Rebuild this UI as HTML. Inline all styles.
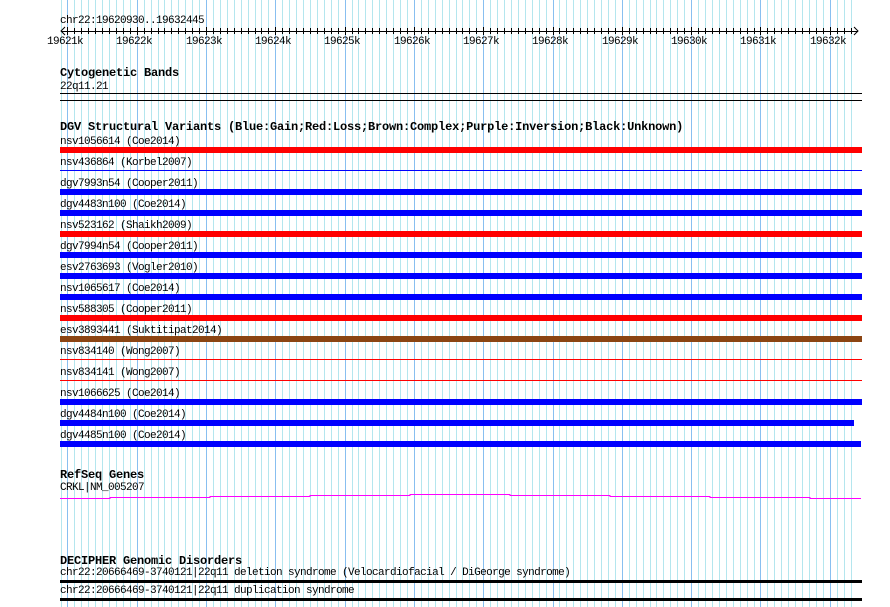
<!DOCTYPE html>
<html><head><meta charset="utf-8"><style>
html,body{margin:0;padding:0;background:#fff;width:890px;height:607px;overflow:hidden}
.t{position:absolute;font-family:"Liberation Mono",monospace;font-size:11px;letter-spacing:-0.6px;line-height:12px;color:#000;white-space:pre}
.h{position:absolute;font-family:"Liberation Mono",monospace;font-weight:bold;font-size:12px;letter-spacing:-0.2px;line-height:13px;color:#000;white-space:pre}
</style></head><body>
<svg id="s" width="890" height="607" style="position:absolute;left:0;top:0" xmlns="http://www.w3.org/2000/svg" shape-rendering="crispEdges">
<defs>
<pattern id="mn" x="60" y="0" width="7" height="607" patternUnits="userSpaceOnUse"><rect x="0" y="0" width="1" height="607" fill="#b4e6ee"/></pattern>
</defs>
<g id="grid"><rect id="fb" x="60" y="0" width="798" height="607" fill="url(#mn)"/></g>
<g id="ticks"></g>
<rect x="61" y="31" width="797" height="1" fill="#000"/>
<path d="M65 27 L61 31 L65 35 M854 27 L858 31 L854 35" stroke="#000" fill="none" stroke-width="1" shape-rendering="auto"/>
<rect x="60" y="93" width="802" height="1" fill="#000"/>
<rect x="60" y="100" width="802" height="1" fill="#000"/>
<rect x="60" y="147" width="802" height="6" fill="#ff0000"/>
<rect x="60" y="170" width="802" height="1" fill="#0000ff"/>
<rect x="60" y="189" width="802" height="6" fill="#0000ff"/>
<rect x="60" y="210" width="802" height="6" fill="#0000ff"/>
<rect x="60" y="231" width="802" height="6" fill="#ff0000"/>
<rect x="60" y="252" width="802" height="6" fill="#0000ff"/>
<rect x="60" y="273" width="802" height="6" fill="#0000ff"/>
<rect x="60" y="294" width="802" height="6" fill="#0000ff"/>
<rect x="60" y="315" width="802" height="6" fill="#ff0000"/>
<rect x="60" y="336" width="802" height="6" fill="#8b4513"/>
<rect x="60" y="359" width="802" height="1" fill="#ff0000"/>
<rect x="60" y="380" width="802" height="1" fill="#ff0000"/>
<rect x="60" y="399" width="802" height="6" fill="#0000ff"/>
<rect x="60" y="420" width="794" height="6" fill="#0000ff"/>
<rect x="60" y="441" width="801" height="6" fill="#0000ff"/>
<path d="M60 498.5 H110 V497.5 H210 V496.5 H310 V495.5 H410 V494.5 H510 V495.5 H610 V496.5 H710 V497.5 H810 V498.5 H861" stroke="#ff00ff" fill="none" stroke-width="1"/>
<rect x="60" y="580" width="802" height="3" fill="#000"/>
<rect x="60" y="598" width="802" height="3" fill="#000"/>
</svg>
<script>
(function(){
var ns="http://www.w3.org/2000/svg",g=document.getElementById("grid"),tk=document.getElementById("ticks");
var fb=document.getElementById("fb");fb.parentNode.removeChild(fb);
for(var i=0;i<115;i++){
 var x=Math.round(60.5+6.93*i);if(x>858)break;
 var major=((i-1)%10===0);
 var r=document.createElementNS(ns,"rect");
 r.setAttribute("x",x);r.setAttribute("y",0);r.setAttribute("width",1);r.setAttribute("height",607);
 r.setAttribute("fill",major?"#88bff0":"#b4e6ee");g.appendChild(r);
 if(x>62&&x<856){var t=document.createElementNS(ns,"rect");
 t.setAttribute("x",x);t.setAttribute("y",major?27:28);t.setAttribute("width",1);t.setAttribute("height",major?8:6);
 t.setAttribute("fill","#000");tk.appendChild(t);}
}
})();
</script>
<div class="t" style="left:60px;top:15px">chr22:19620930..19632445</div>
<div class="t" style="left:47px;top:36px">19621k</div>
<div class="t" style="left:116px;top:36px">19622k</div>
<div class="t" style="left:186px;top:36px">19623k</div>
<div class="t" style="left:255px;top:36px">19624k</div>
<div class="t" style="left:324px;top:36px">19625k</div>
<div class="t" style="left:394px;top:36px">19626k</div>
<div class="t" style="left:463px;top:36px">19627k</div>
<div class="t" style="left:532px;top:36px">19628k</div>
<div class="t" style="left:602px;top:36px">19629k</div>
<div class="t" style="left:671px;top:36px">19630k</div>
<div class="t" style="left:740px;top:36px">19631k</div>
<div class="t" style="left:810px;top:36px">19632k</div>
<div class="h" style="left:60px;top:67px">Cytogenetic Bands</div>
<div class="t" style="left:60px;top:81px">22q11.21</div>
<div class="h" style="left:60px;top:121px">DGV Structural Variants (Blue:Gain;Red:Loss;Brown:Complex;Purple:Inversion;Black:Unknown)</div>
<div class="t" style="left:60px;top:136px">nsv1056614 (Coe2014)</div>
<div class="t" style="left:60px;top:157px">nsv436864 (Korbel2007)</div>
<div class="t" style="left:60px;top:178px">dgv7993n54 (Cooper2011)</div>
<div class="t" style="left:60px;top:199px">dgv4483n100 (Coe2014)</div>
<div class="t" style="left:60px;top:220px">nsv523162 (Shaikh2009)</div>
<div class="t" style="left:60px;top:241px">dgv7994n54 (Cooper2011)</div>
<div class="t" style="left:60px;top:262px">esv2763693 (Vogler2010)</div>
<div class="t" style="left:60px;top:283px">nsv1065617 (Coe2014)</div>
<div class="t" style="left:60px;top:304px">nsv588305 (Cooper2011)</div>
<div class="t" style="left:60px;top:325px">esv3893441 (Suktitipat2014)</div>
<div class="t" style="left:60px;top:346px">nsv834140 (Wong2007)</div>
<div class="t" style="left:60px;top:367px">nsv834141 (Wong2007)</div>
<div class="t" style="left:60px;top:388px">nsv1066625 (Coe2014)</div>
<div class="t" style="left:60px;top:409px">dgv4484n100 (Coe2014)</div>
<div class="t" style="left:60px;top:430px">dgv4485n100 (Coe2014)</div>
<div class="h" style="left:60px;top:469px">RefSeq Genes</div>
<div class="t" style="left:60px;top:482px">CRKL|NM_005207</div>
<div class="h" style="left:60px;top:555px">DECIPHER Genomic Disorders</div>
<div class="t" style="left:60px;top:567px">chr22:20666469-3740121|22q11 deletion syndrome (Velocardiofacial / DiGeorge syndrome)</div>
<div class="t" style="left:60px;top:585px">chr22:20666469-3740121|22q11 duplication syndrome</div>
</body></html>
